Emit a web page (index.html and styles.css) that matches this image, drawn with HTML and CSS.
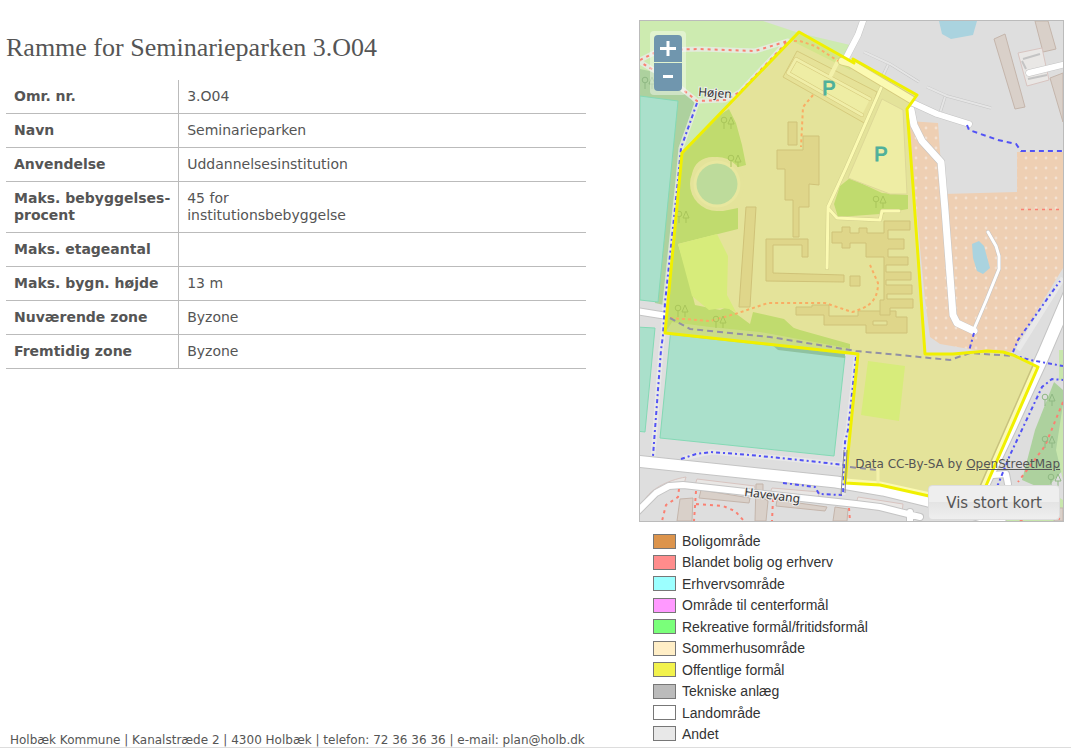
FILE: index.html
```html
<!DOCTYPE html>
<html lang="da">
<head>
<meta charset="utf-8">
<title>Ramme for Seminarieparken 3.O04</title>
<link rel="stylesheet" href="styles.css">
</head>
<body>
<div class="page">
  <main class="info">
    <h1 class="title">Ramme for Seminarieparken 3.O04</h1>
    <table class="facts">
      <tbody>
        <tr><th scope="row">Omr. nr.</th><td>3.O04</td></tr>
        <tr><th scope="row">Navn</th><td>Seminarieparken</td></tr>
        <tr><th scope="row">Anvendelse</th><td>Uddannelsesinstitution</td></tr>
        <tr><th scope="row">Maks. bebyggelses-<br>procent</th><td>45 for<br>institutionsbebyggelse</td></tr>
        <tr><th scope="row">Maks. etageantal</th><td></td></tr>
        <tr><th scope="row">Maks. bygn. højde</th><td>13 m</td></tr>
        <tr><th scope="row">Nuværende zone</th><td>Byzone</td></tr>
        <tr><th scope="row">Fremtidig zone</th><td>Byzone</td></tr>
      </tbody>
    </table>
    <footer class="contact">Holbæk Kommune | Kanalstræde 2 | 4300 Holbæk | telefon: 72 36 36 36 | e-mail: plan@holb.dk</footer>
  </main>
  <aside class="side">
    <div class="map">
      <svg class="map-drawing" viewBox="640 21 423 500" preserveAspectRatio="xMidYMid slice" role="img" aria-label="Kort over Seminarieparken">
        <defs>
          <pattern id="orchard" x="921" y="123" width="10" height="10" patternUnits="userSpaceOnUse">
            <rect width="10" height="10" fill="#eecfb3"/><circle cx="5" cy="5" r="1.4" fill="#f3e2d3"/>
          </pattern>
          <g id="trees" fill="none" stroke-width="1">
            <circle cx="3" cy="4" r="2.8"/><path d="M3 7v6M10 1l-3 7h6zM10 8v5"/>
          </g>
          <clipPath id="zone-clip"><path d="M799 32 854 63 853 59 917 95 907 109 913 186 925 354 953 354 987 351 1003 352 1013 355 1038 367 985 488 975 510 929 496 880 485 845 483 858 354 665 333 682 153Z"/></clipPath>
        </defs>
        <rect x="640" y="21" width="423" height="500" fill="#dedede"/>

        <!-- parks, woods and pitches -->
        <path d="M640 21H763L799 33 850 45 845 62 780 80 683 156 640 120Z" fill="#cdebb0"/>
        <path d="M640 69 654 72 672 86 690 97 695 104 692 122 682 147 676 186 664 305 655 303 640 103Z" fill="#add19e"/>
        <path d="M640 96 678 101 658 302 640 300Z" fill="#aae0cb" stroke="#84d9b5"/>
        <path d="M636 327 655 328 645 432 636 431Z" fill="#aae0cb" stroke="#84d9b5"/>
        <path d="M671 328 660 438 834 456 845 356Z" fill="#aae0cb" stroke="#84d9b5"/>
        <path d="M770 343 845 352 845 358 778 350Z" fill="#8fc2a0"/>
        <path d="M673 328 845 351 845 354 671 335Z" fill="#a5cf91"/>
        <path d="M1054 382 1063 390V470L1045 490 1022 480 1035 430Z" fill="#add19e"/>
        <path d="M1063 404 1056 450 1063 480ZM1003 519 1045 488 1063 500V521H1003Z" fill="#c8e6ad"/>
        <path d="M1059 350h4v30h-4z" fill="#c8e6ad"/>
        <path d="M939 21H977L973 35 951 39 942 34Z" fill="#aad3df"/>

        <!-- orchard -->
        <path d="M908 121 938 123 943 194 1017 192V152H1063V268L1012 352 975 350 940 344 930 337 925 300Z" fill="url(#orchard)"/>
        <path d="M972 244 979 241 984 246 990 268 983 274 977 271 973 258Z" fill="#aad3df"/>

        <!-- buildings outside the zone -->
        <g fill="#d9d0c9" stroke="#c4b5ab">
          <path d="M994 39 1005 34 1025 107 1015 109Z"/>
          <path d="M1035 21H1048L1056 49 1043 52Z"/>
          <path d="M1050 78 1063 73V122Z"/>
          <path d="M680 499 693 498 692 521H677Z"/>
          <path d="M701 490 750 498 749 503 699 498Z"/>
          <path d="M756 484H763V498L768 501 766 521H755Z"/>
          <path d="M777 500 827 507 825 511 776 506Z"/>
          <path d="M835 507 848 509 847 521H833Z"/>
          <path d="M1058 508h5v13h-9z"/>
        </g>
        <g fill="#e9e7e5" stroke="#d8c4c0">
          <path d="M1018 53 1042 48 1049 80 1027 86Z"/>
          <path d="M643 504C647 490 668 480 686 477L684 484 660 491 645 503Z"/>
          <path d="M697 479 755 486 752 492 695 485ZM772 488 820 492 816 500 770 493ZM858 497 903 504 902 513 855 507Z"/>
        </g>
        <path d="M1023 59 1040 54M1026 69 1022 61M1028 79 1047 75" fill="none" stroke="#c4c4c4" stroke-width="2"/>

        <!-- minor lanes -->
        <g fill="none" stroke="#c6c6c6" stroke-width="3"><path d="M864 52 890 64 919 82M888 65 880 82M927 87 947 96 991 108M945 97 940 113"/></g>
        <g fill="none" stroke="#e5e5e5" stroke-width="2"><path d="M864 52 890 64 919 82M888 65 880 82M927 87 947 96 991 108M945 97 940 113"/></g>

        <!-- light casing below the paths -->
        <g fill="none" stroke="#ececec" stroke-width="5" stroke-linejoin="round" opacity=".75">
          <path d="M640 60 660 50 700 49 755 51 788 41 740 92 725 100 697 101 672 81 640 62"/>
          <path d="M697 103 681 148 678 180 665 303 663 335 661 350 653 456"/>
          <path d="M856 357 848 430 845 442 843 495M683 458 711 452 790 459 845 465"/>
          <path d="M1018 350 1063 278"/>
        </g>

        <!-- streets -->
        <g fill="none" stroke-linejoin="round" stroke-linecap="round">
          <g stroke="#c4c4c4">
            <path d="M864 18 858 35 845 60" stroke-width="7"/>
            <path d="M913 103 937 114 969 124" stroke-width="7"/>
            <path d="M911 110 914 125 922 141 941 162 945 210 953 315 957 323 974 331" stroke-width="8"/>
            <path d="M974 329 986 301 999 269V256L996 246 988 232" stroke-width="4"/>
            <path d="M636 311 667 316" stroke-width="8"/>
            <path d="M636 461 836 482 883 490 928 501 1000 521" stroke-width="13"/>
            <path d="M1070 293 1043 356 1010 428 976 500" stroke-width="14"/>
            <path d="M636 513 656 493 669 486 683 485 746 492 856 504 880 507 920 517M910 512v12M993 475 1006 474 1008 484" stroke-width="8"/>
            <path d="M1029 73 1066 64" stroke-width="7"/>
          </g>
          <g stroke="#fff">
            <path d="M864 18 858 35 845 60" stroke-width="6"/>
            <path d="M913 103 937 114 969 124" stroke-width="6"/>
            <path d="M911 110 914 125 922 141 941 162 945 210 953 315 957 323 974 331" stroke-width="7"/>
            <path d="M974 329 986 301 999 269V256L996 246 988 232" stroke-width="3"/>
            <path d="M636 311 667 316" stroke-width="6"/>
            <path d="M636 461 836 482 883 490 928 501 1000 521" stroke-width="11"/>
            <path d="M1070 293 1043 356 1010 428 976 500" stroke-width="12"/>
            <path d="M636 513 656 493 669 486 683 485 746 492 856 504 880 507 920 517M910 512v12M993 475 1006 474 1008 484" stroke-width="6"/>
            <path d="M1029 73 1066 64" stroke-width="6"/>
          </g>
        </g>

        <!-- red and blue paths -->
        <g fill="none" stroke="#fa8072" stroke-width="2" stroke-dasharray="3 4">
          <path d="M640 60 660 50 700 49 755 51 788 41 740 92 725 100 697 101 672 81 640 62"/>
          <path d="M1021 209.500H1063" stroke-width="1.500"/>
          <path d="M679 489 678 497 666 505 662 521M696 491 694 521M696 504 723 506 735 511 744 521M773 499 772 521M849 508 850 521M1063 402 1045 446 1018 482M1020 521 1035 512 1060 519"/>
        </g>
        <g fill="none" stroke="#5252f5" stroke-width="2" stroke-dasharray="4 3 2 3">
          <path d="M697 103 681 148 678 180 665 303 663 335 661 350 653 456"/>
          <path d="M681 459 696 454 711 452 750 455 790 459 845 465"/>
          <path d="M783 483 815 487 819 494 842 495"/>
          <path d="M856 357 848 430 845 442 843 495"/>
          <path d="M967 125 969 130 998 140 1016 144 1021 151H1063" stroke-dasharray="5 4"/>
          <path d="M974 333 969 351M1013 352 1018 340 1060 281M1013 355 1030 360 1063 366"/>
          <path d="M997 487 1010 455 1042 387 1052 379 1063 380"/>
        </g>

        <!-- planning zone -->
        <g clip-path="url(#zone-clip)">
          <rect x="640" y="21" width="423" height="500" fill="#e4e39a"/>
          <path d="M799 32 855 60 850 70 790 40Z" fill="#d4e58a"/>
          <path d="M729 109 736 123 742 145 746 165 735 168C720 150 694 155 692 175 690 195 706 211 723 211L738 208V229L678 244 686 270 695 305 720 310 727 307 750 324 753 312 784 319 797 331 850 345 850 353 665 333 665 150Z" fill="#c0db6e"/>
          <path d="M678 244 717 234 728 256 727 295 736 312 729 309 722 308 709 310 692 296Z" fill="#d7ec7b"/>
          <circle cx="717" cy="184" r="27" fill="#e4e39a"/>
          <circle cx="717" cy="184" r="23.500" fill="#e8e79f"/>
          <circle cx="717" cy="184" r="20.500" fill="#bddb9b"/>
          <path d="M670 306 700 318 750 327 770 320 800 330 850 344V350L755 333 690 327Z" fill="#c0db6e"/>
          <path d="M665 333 672 322 710 327 760 332 858 350V355Z" fill="#d8dfa0" opacity=".5"/>
          <path d="M868 361 905 366 899 421 861 415Z" fill="#d7ec7b"/>
          <path d="M850 178 882 193 908 195V209L880 214 838 217 834 204 840 186Z" fill="#c0db6e"/>
          <path d="M882 99 903 110 907 194 890 194 848 178Z" fill="#eeeda4" stroke="#ddd897"/>
          <path d="M797 51 877 92 866 124 783 77Z" fill="#e6e298" stroke="#d5ca7d"/>
          <path d="M796 59 870 99 862 115 788 72Z" fill="#eeeda4"/>
          <g fill="none" stroke-linejoin="round" stroke-linecap="round">
            <path d="M870 99 796 59 788 73 862 115" stroke="#d5ca7d" stroke-width="4"/>
            <path d="M870 99 796 59 788 73 862 115" stroke="#f0eea8" stroke-width="3"/>
            <path d="M838 61 831 75" stroke="#f3f1ab" stroke-width="4"/>
            <path d="M842 61 850 63 917 103" stroke="#d5ca7d" stroke-width="9"/>
            <path d="M842 61 850 63 917 103" stroke="#fbfab2" stroke-width="7"/>
            <path d="M881 88 846 168 828 207 827 268M828 208 837 218 880 220 882 211 899 211" stroke="#d2ce8c" stroke-width="4"/>
            <path d="M881 88 846 168 828 207 827 268M828 208 837 218 880 220 882 211 899 211" stroke="#fbfab2" stroke-width="3"/>
            <path d="M1038 367 985 488" stroke="#c8c27e" stroke-width="12"/>
            <path d="M1038 367 985 488" stroke="#fbfab2" stroke-width="9"/>
            <path d="M845 482 880 485 930 496" stroke="#fbfab2" stroke-width="7"/>
            <path d="M878 484V465" stroke="#f3f1ab" stroke-width="3"/>
          </g>
          <g fill="#dfd68a" stroke="#cfc278">
            <path d="M788 122H797V145H788Z"/>
            <path d="M803 136H819V185L809 184V207H799V237H793V200H785V169H777V150H803Z"/>
            <path d="M746 207H756L750 307H739Z"/>
            <path d="M766 239H808V257H802V245H773V273L844 275V282L766 281Z"/>
            <path d="M796 307H812V305H829V316H858V311H896V317H907V333H866V325H824V315H796Z"/>
            <path d="M832 232H842V227H850V233H859V228H867V233H884V221H910V230H888V239H904V249H888V257H908V265H886V272H911V280H886V285H912V294H887V299H913V308H890V315H880V300H884V257H866V243H850V248H842V243H832Z"/>
            <path d="M850 276H860V286H850Z"/>
            <path d="M873 321h14v4h-14z" fill="#e4e39a"/>
          </g>
          <g fill="none" stroke="#f9ad64" stroke-width="2" stroke-dasharray="3 3">
            <path d="M788 41 800 41 815 46 838 61M813 95 803 107 801 147"/>
            <path d="M670 318 710 321 735 314 768 303 825 303 852 312C870 307 878 300 878 283L870 265"/>
          </g>
          <path d="M670 318 690 329 770 337 856 351 900 355 950 360 970 353 1013 356M850 467 877 470" fill="none" stroke="#9391a4" stroke-width="2" stroke-dasharray="6 4"/>
          <g stroke="#a9c55b">
            <use href="#trees" x="721" y="116"/><use href="#trees" x="728" y="154"/><use href="#trees" x="676" y="210"/><use href="#trees" x="675" y="304"/><use href="#trees" x="713" y="315"/><use href="#trees" x="873" y="195"/>
          </g>
        </g>
        <path d="M799 32 854 63 853 59 917 95 907 109 913 186 925 354 953 354 987 351 1003 352 1013 355 1038 367 985 488 975 510 929 496 880 485 845 483 858 354 665 333 682 153Z" fill="none" stroke="#f0f000" stroke-width="3" stroke-linejoin="round"/>
        <g stroke="#8fb883"><use href="#trees" x="642" y="76"/><use href="#trees" x="1042" y="393"/><use href="#trees" x="1042" y="435"/><use href="#trees" x="1048" y="473"/></g>
        <path d="M844 450 841 495M847 450 845 493" stroke="#8b8b8b" fill="none"/>

        <g class="map-text">
          <text class="parking" x="829" y="95">P</text>
          <text class="parking" x="881" y="161">P</text>
          <text class="street" transform="translate(698 96) rotate(4)">Højen</text>
          <text class="street" transform="translate(744 496) rotate(7)">Havevang</text>
        </g>
      </svg>
      <div class="zoom">
        <button class="zoom-button" type="button" aria-label="Zoom ind"><svg viewBox="0 0 28 28" aria-hidden="true"><path d="M14 6v15M6 13.500h16"/></svg></button>
        <button class="zoom-button" type="button" aria-label="Zoom ud"><svg viewBox="0 0 28 28" aria-hidden="true"><path d="M9 13.500h10"/></svg></button>
      </div>
      <div class="map-corner">
        <p class="credit">Data CC-By-SA by <a href="#osm">OpenStreetMap</a></p>
        <button class="large-map" type="button">Vis stort kort</button>
      </div>
    </div>
    <ul class="legend">
      <li><span class="swatch housing"></span>Boligområde</li>
      <li><span class="swatch mixed"></span>Blandet bolig og erhverv</li>
      <li><span class="swatch business"></span>Erhvervsområde</li>
      <li><span class="swatch centre"></span>Område til centerformål</li>
      <li><span class="swatch leisure"></span>Rekreative formål/fritidsformål</li>
      <li><span class="swatch summer"></span>Sommerhusområde</li>
      <li><span class="swatch public"></span>Offentlige formål</li>
      <li><span class="swatch technical"></span>Tekniske anlæg</li>
      <li><span class="swatch rural"></span>Landområde</li>
      <li><span class="swatch other"></span>Andet</li>
    </ul>
  </aside>
</div>
</body>
</html>
```
FILE: styles.css
```css
* { box-sizing: border-box; }
body {
  margin: 0;
  background: #fff;
  color: #555;
  font-family: Verdana, "DejaVu Sans", sans-serif;
  font-size: 14px;
}
.page {
  display: grid;
  grid-template-columns: minmax(0, 1fr) 425px;
  column-gap: 53px;
  padding: 20px 7px 0 6px;
  border-bottom: 1px solid #ddd;
}
.info { display: flex; flex-direction: column; }
.title {
  margin: 14px 0 18px;
  font-family: Georgia, "Liberation Serif", serif;
  font-size: 26px;
  font-weight: 400;
  line-height: 28px;
}
.facts {
  width: 100%;
  border-collapse: separate;
  border-spacing: 0;
  line-height: 17px;
}
.facts th, .facts td {
  height: 34px;
  padding: 8px;
  border-bottom: 1px solid #bbb;
  text-align: left;
  vertical-align: top;
}
.facts th { width: 173px; border-right: 1px solid #bbb; white-space: nowrap; }
.contact {
  margin-top: auto;
  padding-left: 4px;
  font-size: 12px;
  line-height: 14px;
}
.map {
  position: relative;
  border: 1px solid #bbb;
}
.map-drawing { display: block; width: 100%; height: auto; }
.map-text { font-family: "Noto Sans", sans-serif; }
.parking { font-family: "Liberation Sans", sans-serif; font-size: 20px; fill: #4fb09b; stroke: #4fb09b; text-anchor: middle; }
.street {
  font-size: 12px;
  fill: #333;
  stroke: #eee;
  stroke-width: 2px;
  paint-order: stroke;
}
.zoom {
  position: absolute;
  top: 10px;
  left: 10px;
  display: grid;
  gap: 1px;
  padding: 4px;
  border-radius: 4px;
  background: rgba(255, 255, 255, .4);
}
.zoom-button {
  width: 28px;
  height: 28px;
  padding: 0;
  border: 0;
  background: #7096ae;
}
.zoom-button:first-child { height: 27px; border-radius: 4px 4px 0 0; }
.zoom-button:last-child { border-radius: 0 0 4px 4px; }
.zoom-button svg { display: block; fill: none; stroke: #fff; stroke-width: 3; }
.map-corner {
  position: absolute;
  right: 3px;
  bottom: 1px;
  display: flex;
  flex-direction: column;
  align-items: flex-end;
  gap: 14px;
}
.credit { margin: 0; font-size: 12px; line-height: 14px; }
.credit a { color: inherit; }
.large-map {
  height: 35px;
  padding: 0 17px;
  border: 1px solid #ddd;
  border-radius: 4px;
  background: linear-gradient(#eee 50%, #e4e4e4 50%, #efefef);
  color: #555;
  font: inherit;
  font-size: 15px;
}
.legend {
  display: flex;
  flex-direction: column;
  justify-content: space-between;
  min-height: 211px;
  margin: 10px 0 4px;
  padding: 0 0 0 14px;
  list-style: none;
  color: #333;
  font-family: Arial, "Liberation Sans", sans-serif;
  font-size: 14px;
  line-height: 18px;
}
.legend li { display: flex; align-items: center; gap: 6px; }
.swatch { width: 23px; height: 15px; border: 1px solid #777; }
.housing { background: #dc944c; }
.mixed { background: #ff8c8c; }
.business { background: #9cffff; }
.centre { background: #ff99ff; }
.leisure { background: #7aff7a; }
.summer { background: #ffeec6; }
.public { background: #f2f24c; }
.technical { background: #bbb; }
.rural { background: #fff; }
.other { background: #e8e8e8; }
```
